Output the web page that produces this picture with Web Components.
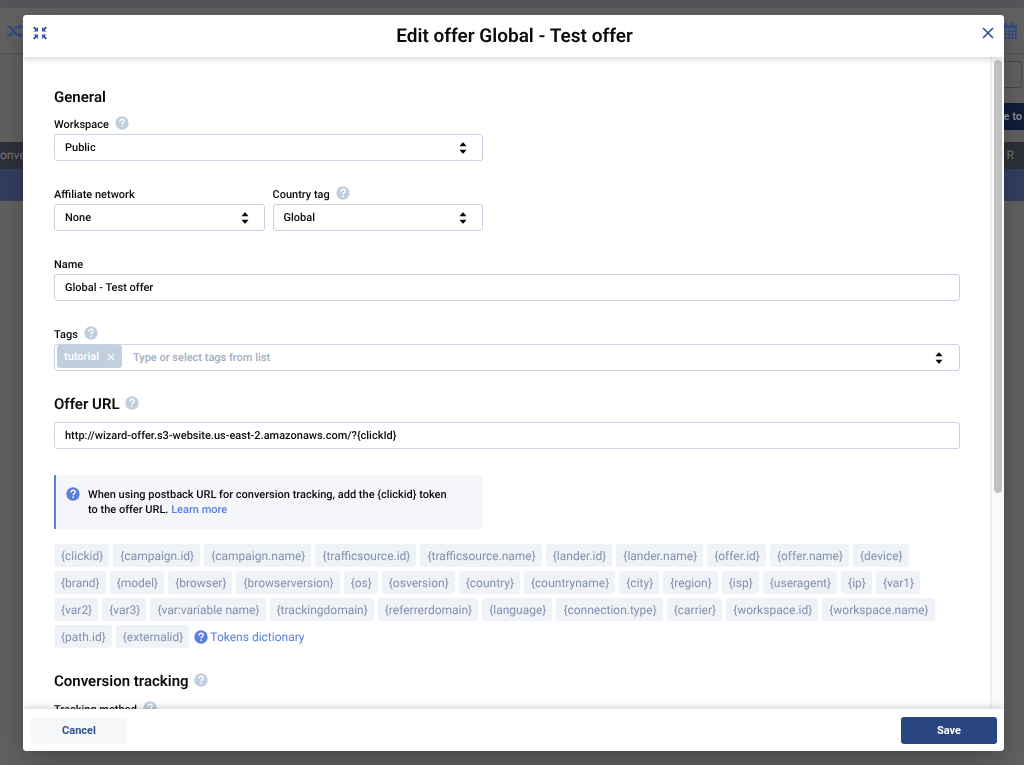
<!DOCTYPE html>
<html lang="en">
<head>
<meta charset="utf-8">
<meta name="viewport" content="width=device-width, initial-scale=1">
<title>Edit offer</title>
<style>
  html, body { margin: 0; height: 100%; }
  body {
    font-family: Roboto, "Liberation Sans", sans-serif;
    font-size: 11px;
    font-weight: 500;
    text-rendering: geometricPrecision;
    color: #0b0b0d;
    overflow: hidden;
    --navy: #2a4680;
    --blue: #5a7fe0;
    --line: #c5d3e2;
    --muted: #c0cedd;
  }
</style>
</head>
<body>
<offer-backdrop></offer-backdrop>
<offer-modal heading="Edit offer Global - Test offer">
  <form-section heading="General">
    <select-field label="Workspace" help value="Public" class="half"></select-field>
    <field-row class="half">
      <select-field label="Affiliate network" value="None"></select-field>
      <select-field label="Country tag" help value="Global"></select-field>
    </field-row>
    <text-field label="Name" value="Global - Test offer"></text-field>
    <tags-field label="Tags" tag="tutorial" placeholder="Type or select tags from list"></tags-field>
  </form-section>
  <form-section heading="Offer URL" help>
    <url-field label="Offer URL" value="http://wizard-offer.s3-website.us-east-2.amazonaws.com/?{clickId}"></url-field>
    <info-note class="half">When using postback URL for conversion tracking, add the {clickid} token<br>to the offer URL. <a href="#learn">Learn more</a></info-note>
    <token-list tokens="clickid|campaign.id|campaign.name|trafficsource.id|trafficsource.name|lander.id|lander.name|offer.id|offer.name|device|brand|model|browser|browserversion|os|osversion|country|countryname|city|region|isp|useragent|ip|var1|var2|var3|var:variable name|trackingdomain|referrerdomain|language|connection.type|carrier|workspace.id|workspace.name|path.id|externalid"></token-list>
  </form-section>
  <form-section heading="Conversion tracking" help>
    <select-field label="Tracking method" help value="S2S Postback URL" class="half"></select-field>
  </form-section>
</offer-modal>

<script>
const define = (name, html, setup) => {
  const template = document.createElement('template');
  template.innerHTML = html;
  customElements.define(name, class extends HTMLElement {
    constructor() {
      super();
      this.attachShadow({ mode: 'open' }).append(template.content.cloneNode(true));
    }
    connectedCallback() {
      if (setup) setup(this, this.shadowRoot);
    }
  });
};

define('help-icon', `
  <style>
    :host { display: inline-block; width: 14px; height: 14px; color: var(--muted); flex: none; }
    :host([strong]) { color: var(--blue); }
    svg { display: block; }
  </style>
  <svg viewBox="0 0 14 14" width="14" height="14" aria-hidden="true">
    <circle cx="7" cy="7" r="6.7" fill="currentColor"/>
    <path d="M4.9 5.6C4.9 4.1 5.8 3.3 7.1 3.3c1.2 0 2.1.7 2.1 1.8 0 1.5-2 1.6-2 3.1" fill="none" stroke="#fff" stroke-width="1.4"/>
    <circle cx="7.1" cy="10.2" r=".9" fill="#fff"/>
  </svg>`);

define('sort-arrows', `
  <style>:host { display: block; width: 8px; height: 12px; pointer-events: none; } svg { display: block; }</style>
  <svg viewBox="0 0 8 12" width="8" height="12" aria-hidden="true">
    <path d="M.5 4.300 3.400.8Q4 .2 4.600.8L7.500 4.300ZM.5 7.700H7.500L4.600 11.200Q4 11.800 3.400 11.200Z" fill="#000"/>
  </svg>`);

const labelStyles = `
  :host { display: block; min-width: 0; }
  label { display: flex; align-items: center; gap: 6px; box-sizing: border-box; height: 20px; padding-top: 2px; line-height: 18px; }
  help-icon { margin-bottom: 4px; }
  .control { display: grid; align-items: center; }
  .control > * { grid-area: 1 / 1; }
  sort-arrows { justify-self: end; margin-right: 16px; }
  input, select {
    appearance: none; box-sizing: border-box; width: 100%; height: 27px; margin: 0; padding: 0 10px;
    border: 1px solid var(--line); border-radius: 3px; background: #fff; outline: none;
    font: inherit; color: inherit; text-rendering: inherit;
  }`;

const fillLabel = (host, root) => {
  const label = root.querySelector('label');
  label.querySelector('span').textContent = host.getAttribute('label');
  if (host.hasAttribute('help')) label.append(document.createElement('help-icon'));
};

define('select-field', `
  <style>${labelStyles}</style>
  <label for="c"><span></span></label>
  <div class="control"><select id="c"><option></option></select><sort-arrows></sort-arrows></div>`,
  (host, root) => {
    fillLabel(host, root);
    root.querySelector('option').textContent = host.getAttribute('value');
  });

define('text-field', `
  <style>${labelStyles}</style>
  <label for="c"><span></span></label>
  <input id="c" type="text">`,
  (host, root) => {
    fillLabel(host, root);
    root.querySelector('input').value = host.getAttribute('value');
  });

define('url-field', `
  <style>${labelStyles}</style>
  <input type="text">`,
  (host, root) => {
    const input = root.querySelector('input');
    input.value = host.getAttribute('value');
    input.setAttribute('aria-label', host.getAttribute('label'));
  });

define('tags-field', `
  <style>${labelStyles}
    .box { display: flex; align-items: center; box-sizing: border-box; height: 27px; padding-left: 2px;
      border: 1px solid var(--line); border-radius: 3px; background: #fff; }
    .tag { display: flex; align-items: center; gap: 8px; height: 23px; margin-bottom: 2px; padding: 0 7px;
      border-radius: 3px; background: var(--muted); color: #fff; }
    button { display: block; padding: 0; border: 0; background: none; color: inherit; }
    svg { display: block; }
    input { flex: 1; width: auto; height: 25px; padding: 0 11px; border: 0; }
    input::placeholder { color: #a2adc0; opacity: 1; }
  </style>
  <label for="c"><span></span><help-icon></help-icon></label>
  <div class="box">
    <div class="tag"><span class="text"></span><button type="button" aria-label="Remove tag">
      <svg width="8" height="8" viewBox="0 0 8 8"><path d="M.7.7l6.600 6.600M7.300.7L.7 7.300" stroke="currentColor" stroke-width="1.200"/></svg></button></div>
    <input id="c" type="text"><sort-arrows></sort-arrows>
  </div>`,
  (host, root) => {
    root.querySelector('label span').textContent = host.getAttribute('label');
    root.querySelector('.text').textContent = host.getAttribute('tag');
    root.querySelector('input').placeholder = host.getAttribute('placeholder');
  });

define('field-row', `
  <style>:host { display: grid; grid-template-columns: 1fr 1fr; gap: 8px; }</style><slot></slot>`);

define('form-section', `
  <style>
    :host { display: block; }
    h2 { display: flex; align-items: center; gap: 5px; height: 20px; margin: 0 0 7px;
      font-size: 15px; font-weight: 600; line-height: 20px; }
    :host([help]) h2 { margin-bottom: 8px; }
    help-icon { margin-bottom: 2px; }
    .fields { display: flex; flex-direction: column; gap: 23px; }
    ::slotted(.half) { width: calc(50% - 24px); }
    ::slotted(info-note) { margin-top: 3px; }
    ::slotted(token-list) { margin-top: -8px; }
  </style>
  <h2><span></span></h2>
  <div class="fields"><slot></slot></div>`,
  (host, root) => {
    root.querySelector('span').textContent = host.getAttribute('heading');
    if (host.hasAttribute('help')) root.querySelector('h2').append(document.createElement('help-icon'));
  });

define('info-note', `
  <style>
    :host { display: flex; box-sizing: border-box; gap: 8px; padding: 12px 10px;
      border-left: 2px solid var(--blue); background: #f5f6f9; line-height: 15px; }
    ::slotted(a) { color: var(--blue); text-decoration: none; }
    .text { flex: 1; }
  </style>
  <help-icon strong></help-icon>
  <div class="text"><slot></slot></div>`);

define('token-list', `
  <style>
    :host { display: flex; flex-wrap: wrap; gap: 4px; padding-right: 25px; font-size: 12px; font-weight: 400; }
    button { height: 23px; padding: 0 6px 0 7px; border: 0; border-radius: 3px; background: #eff3f8; color: #8390ad; font: inherit; text-rendering: inherit; }
    a { display: flex; align-items: center; gap: 2px; height: 23px; margin-left: 1px; color: var(--blue); text-decoration: none; }
  </style>
  <a href="#tokens"><help-icon strong></help-icon>Tokens dictionary</a>`,
  (host, root) => {
    const link = root.querySelector('a');
    for (const token of host.getAttribute('tokens').split('|')) {
      const button = document.createElement('button');
      button.type = 'button';
      button.textContent = '{' + token + '}';
      link.before(button);
    }
  });

define('offer-modal', `
  <style>
    :host { position: fixed; inset: 0; display: flex; box-sizing: border-box; padding: 15px 20px 14px 23px; }
    section { flex: 1; min-width: 0; display: grid; grid-template-rows: 42px minmax(0, 1fr) 42px; border-radius: 4px;
      overflow: hidden; background: #fff; box-shadow: 0 10px 30px rgba(0, 0, 0, .25); }
    header, footer { display: flex; justify-content: space-between; z-index: 1; background: #fff; }
    header { align-items: center; padding: 0 10px; box-shadow: 0 1px 8px rgba(0, 0, 0, .2); }
    footer { align-items: center; padding: 0 7px 0 8px; box-shadow: 0 -1px 8px rgba(0, 0, 0, .2); }
    h1 { margin: 0; font-size: 19px; font-weight: 600; line-height: 24px; }
    .icon { display: block; padding: 0; margin-bottom: 6px; border: 0; background: none; color: #34539b; }
    svg { display: block; }
    .body { display: grid; grid-template-columns: minmax(0, 1fr) 14px; min-height: 0; }
    .scroll { display: flex; flex-direction: column; gap: 23px; padding: 30px 30px 30px 31px; overflow-y: auto; scrollbar-width: none; }
    .track { padding: 3px 2px; border-left: 2px solid #f0f0f0; background: #fafafa; }
    .thumb { height: 67%; border-radius: 4px; background: #c1c1c1; }
    .action { width: 96px; height: 27px; border: 0; border-radius: 3px; font: inherit; font-weight: 700; background: #f5f7f9; color: #34508c; }
    .primary { background: var(--navy); color: #fff; }
  </style>
  <section role="dialog" aria-labelledby="t">
    <header>
      <button class="icon" aria-label="Shrink"><svg width="14" height="14" viewBox="0 0 15 14">
        <path d="M.7.7 4 4M14.300.7 11 4M.7 13.300 4 10M14.300 13.300 11 10" stroke="currentColor" stroke-width="2"/>
        <path d="M5.300.7v4.600H.7ZM9.700.7v4.600H14.300ZM5.300 13.300V8.700H.7ZM9.700 13.300V8.700H14.300Z" fill="currentColor"/></svg></button>
      <h1 id="t"></h1>
      <button class="icon" aria-label="Close"><svg width="12" height="12" viewBox="0 0 12 12">
        <path d="M1 1l10 10M11 1L1 11" stroke="currentColor" stroke-width="1.700"/></svg></button>
    </header>
    <div class="body"><div class="scroll"><slot></slot></div><div class="track"><div class="thumb"></div></div></div>
    <footer><button class="action">Cancel</button><button class="action primary">Save</button></footer>
  </section>`,
  (host, root) => { root.querySelector('h1').textContent = host.getAttribute('heading'); });

define('offer-backdrop', `
  <style>
    :host { display: block; height: 100%; background: #616161; color: #8b8e93; }
    svg { display: block; }
    .top { height: 8px; background: #545559; }
    .bar { display: flex; justify-content: space-between; align-items: center; box-sizing: border-box; height: 46px;
      padding: 0 7px; border-bottom: 1px solid #525252; color: #31498c; }
    .search { display: flex; justify-content: flex-end; margin: 7px 2px 0; }
    .search input { box-sizing: border-box; width: 200px; height: 27px; border: 1px solid #474747; border-radius: 3px; background: none; }
    .act { display: flex; justify-content: flex-end; margin-top: 15px; }
    .act button { width: 160px; height: 27px; padding: 0 2px; border: 0; background: #0f1d3c; color: #8b8e93; font: inherit; font-weight: 600; text-align: right; }
    .head { display: flex; justify-content: space-between; height: 27px; margin-top: 12px; padding-right: 10px; background: #2d3139; line-height: 27px; font-size: 12px; font-weight: 400; color: #777a80; }
    .row { height: 32px; background: #333e60; }
  </style>
  <div class="top"></div>
  <div class="bar">
    <svg width="16" height="14" viewBox="0 0 16 14" fill="none" stroke="currentColor" stroke-width="2.200">
      <path d="M0 3h3.500l6 8H13M0 11h3.500l1.700-2.300M7.700 5.300 9.500 3H13"/>
      <path d="M12 0l4 3-4 3ZM12 8l4 3-4 3Z" fill="currentColor" stroke="none"/></svg>
    <svg width="16" height="16" viewBox="0 0 16 16" fill="none" stroke="currentColor">
      <path d="M1 3h14v12H1Z" stroke-width="1.500"/><path d="M1 4h14M4.500 0v4M11.500 0v4" stroke-width="2.500"/>
      <path d="M1 8.500h14M1 11.500h14M4.500 6v9M8 6v9M11.500 6v9" stroke-width="1"/></svg>
  </div>
  <div class="search"><input type="text" aria-label="Search"></div>
  <div class="act"><button type="button">e to</button></div>
  <div class="head"><span>onve</span><span>R</span></div>
  <div class="row"></div>`);
</script>
</body>
</html>
